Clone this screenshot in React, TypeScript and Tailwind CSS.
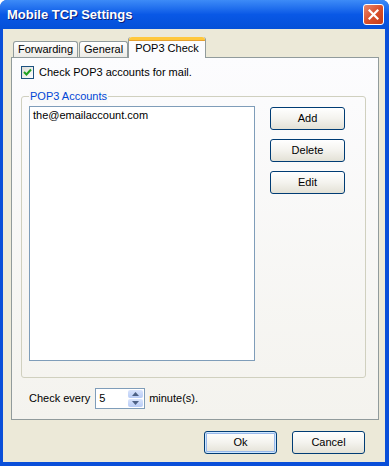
import React from "react"

function XpButton({ label, def = false, w = "w-[75px]" }: { label: string; def?: boolean; w?: string }) {
  return (
    <div
      className={
        "flex h-[23px] items-center justify-center rounded-[3px] border border-[#003C74] bg-gradient-to-b from-[#FFFFFF] via-[#F4F3EE] to-[#E3E1D6] text-black " +
        w +
        (def ? " shadow-[inset_0_0_0_1px_#CEE7FF,inset_0_0_0_2px_#98B8EA]" : "")
      }
    >
      {label}
    </div>
  )
}

function CloseIcon() {
  return (
    <svg width="11" height="11" viewBox="0 0 11 11">
      <path d="M1.5 1.5 L9.5 9.5 M9.5 1.5 L1.5 9.5" stroke="white" strokeWidth="2.2" strokeLinecap="square" />
    </svg>
  )
}

export default function App() {
  return (
    <div
      className="flex h-[466px] w-[389px] flex-col overflow-hidden rounded-t-[7px] bg-[#0A4FD9] text-[11px] leading-[13px] text-black"
      style={{ fontFamily: "Tahoma, 'Liberation Sans', Arial, sans-serif" }}
    >
      {/* title bar */}
      <div className="flex h-[29px] shrink-0 items-center justify-between bg-gradient-to-b from-[#3D8BF7] via-[#0958E6] to-[#0450D8] pl-[7px] pr-[5px]">
        <span
          className="text-[13px] font-bold text-white [text-shadow:1px_1px_0_#0A1E7A]"
          style={{ fontFamily: "'Liberation Sans', Arial, sans-serif" }}
        >
          Mobile TCP Settings
        </span>
        <div className="flex h-[21px] w-[21px] items-center justify-center rounded-[3px] border border-white bg-gradient-to-br from-[#E9876D] via-[#D9502C] to-[#C23B18]">
          <CloseIcon />
        </div>
      </div>

      {/* body */}
      <div className="mb-[4px] ml-[3px] mr-[4px] flex flex-1 flex-col bg-[#ECE9D8] pl-[8px] pr-[7px] pt-[8px]">
        {/* tabs */}
        <div className="flex items-end pl-[2px]">
          <div className="-mr-[1px] flex h-[16px] items-center rounded-t-[3px] border border-b-0 border-[#919B9C] bg-gradient-to-b from-white to-[#ECEBE6] px-[4px]">
            Forwarding
          </div>
          <div className="ml-[2px] flex h-[16px] items-center rounded-t-[3px] border border-b-0 border-[#919B9C] bg-gradient-to-b from-white to-[#ECEBE6] px-[4px]">
            General
          </div>
          <div className="relative z-10 -mb-[1px] flex h-[21px] flex-col rounded-t-[3px] border-x border-[#919B9C] bg-[#FCFCFE]">
            <div className="h-[3px] rounded-t-[3px] bg-[#FFC83C] shadow-[0_1px_0_#E6A030]" />
            <div className="flex flex-1 items-center px-[6px] pb-[1px]">POP3 Check</div>
          </div>
        </div>

        {/* panel */}
        <div className="flex h-[363px] w-[368px] flex-col border border-[#919B9C] bg-gradient-to-b from-[#FCFCFE] to-[#F4F3EE] pl-[9px] pt-[8px]">
          <label className="flex items-center gap-[5px]">
            <span className="flex h-[13px] w-[13px] items-center justify-center border border-[#1C5180] bg-gradient-to-br from-[#DCDCD7] to-white">
              <svg width="9" height="9" viewBox="0 0 9 9">
                <path d="M1 4 L3.5 6.5 L8 1.5" fill="none" stroke="#21A121" strokeWidth="2" />
              </svg>
            </span>
            Check POP3 accounts for mail.
          </label>

          {/* group box */}
          <div className="relative mt-[17px] flex h-[282px] w-[345px] rounded-[3px] border border-[#D0D0BF] pl-[7px] pt-[9px]">
            <span className="absolute -top-[7px] left-[7px] bg-[#F9F9F8] px-[1px] text-[#0046D5]">POP3 Accounts</span>
            <div className="h-[255px] w-[226px] border border-[#7F9DB9] bg-white px-[3px] pt-[2px]">
              the@emailaccount.com
            </div>
            <div className="ml-[15px] mt-[1px] flex flex-col gap-[9px]">
              <XpButton label="Add" />
              <XpButton label="Delete" />
              <XpButton label="Edit" />
            </div>
          </div>

          {/* interval */}
          <div className="mt-[10px] flex items-center pl-[8px]">
            <span>Check every</span>
            <div className="ml-[5px] flex h-[21px] w-[50px] items-center border border-[#7F9DB9] bg-white p-[1px]">
              <span className="flex-1 pl-[2px]">5</span>
              <div className="flex h-full w-[15px] flex-col gap-px">
                <div className="flex flex-1 items-center justify-center rounded-[2px] bg-gradient-to-b from-[#D9E4FC] to-[#B8CCF6]">
                  <svg width="7" height="4" viewBox="0 0 7 4"><path d="M0 4 L3.5 0 L7 4Z" fill="#4D6185" /></svg>
                </div>
                <div className="flex flex-1 items-center justify-center rounded-[2px] bg-gradient-to-b from-[#D9E4FC] to-[#B8CCF6]">
                  <svg width="7" height="4" viewBox="0 0 7 4"><path d="M0 0 L3.5 4 L7 0Z" fill="#4D6185" /></svg>
                </div>
              </div>
            </div>
            <span className="ml-[4px]">minute(s).</span>
          </div>
        </div>

        {/* footer buttons */}
        <div className="mt-[11px] flex justify-end gap-[15px] pr-[13px]">
          <XpButton label="Ok" def w="w-[73px]" />
          <XpButton label="Cancel" w="w-[73px]" />
        </div>
      </div>
    </div>
  )
}
